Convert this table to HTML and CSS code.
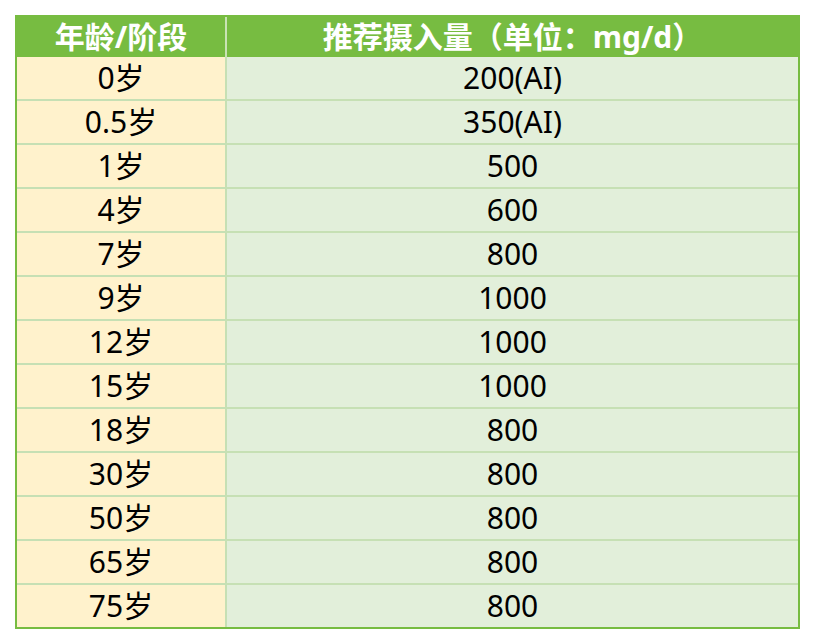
FILE: index.html
```html
<!DOCTYPE html>
<html lang="zh-CN">
<head>
<meta charset="utf-8">
<title>钙推荐摄入量</title>
<link rel="stylesheet" href="styles.css">
</head>
<body>
<table class="intake">
  <thead>
    <tr><th class="col-age">年龄/阶段</th><th class="col-val">推荐摄入量（单位：mg/d）</th></tr>
  </thead>
  <tbody>
    <tr><td class="col-age">0岁</td><td class="col-val">200(AI)</td></tr>
    <tr><td class="col-age">0.5岁</td><td class="col-val">350(AI)</td></tr>
    <tr><td class="col-age">1岁</td><td class="col-val">500</td></tr>
    <tr><td class="col-age">4岁</td><td class="col-val">600</td></tr>
    <tr><td class="col-age">7岁</td><td class="col-val">800</td></tr>
    <tr><td class="col-age">9岁</td><td class="col-val">1000</td></tr>
    <tr><td class="col-age">12岁</td><td class="col-val">1000</td></tr>
    <tr><td class="col-age">15岁</td><td class="col-val">1000</td></tr>
    <tr><td class="col-age">18岁</td><td class="col-val">800</td></tr>
    <tr><td class="col-age">30岁</td><td class="col-val">800</td></tr>
    <tr><td class="col-age">50岁</td><td class="col-val">800</td></tr>
    <tr><td class="col-age">65岁</td><td class="col-val">800</td></tr>
    <tr><td class="col-age">75岁</td><td class="col-val">800</td></tr>
  </tbody>
</table>
</body>
</html>
```
FILE: styles.css
```css
html, body {
  margin: 0;
  padding: 0;
  background: #ffffff;
}
body {
  padding: 15px 0 0 15px;
  font-family: "Noto Sans", "Noto Sans CJK SC", sans-serif;
}
.intake {
  border-collapse: separate;
  border-spacing: 0;
  border: 2px solid #77bc41;
  width: 785px;
  table-layout: fixed;
}
.intake th,
.intake td {
  box-sizing: border-box;
  padding: 0;
  text-align: center;
  vertical-align: middle;
  font-size: 30px;
  line-height: 1;
}
.intake th {
  height: 40px;
  background: #77bc41;
  color: #ffffff;
  font-weight: bold;
}
.intake th.col-age {
  width: 210px;
  border-right: 2px solid #c9e3b4;
}
.intake td {
  height: 44px;
  border-bottom: 2px solid #c6e0b4;
  color: #000000;
  font-weight: normal;
}
.intake tbody tr:last-child td {
  height: 42px;
  border-bottom: none;
}
.intake td.col-age {
  background: #fff2cc;
  border-right: 2px solid #c6e0b4;
}
.intake td.col-val {
  background: #e2efda;
}
```
